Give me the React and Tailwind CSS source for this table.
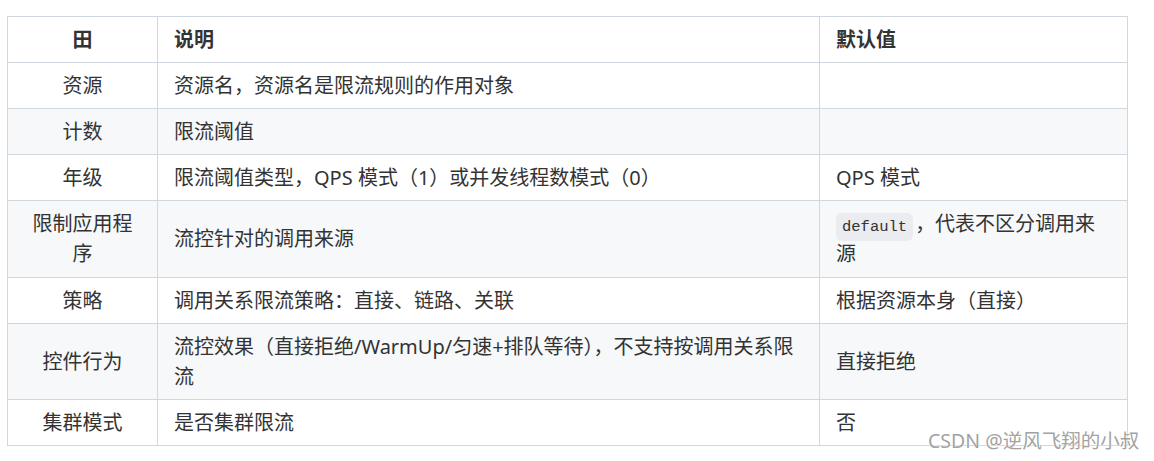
import React from 'react';

const rows = [
  { name: '资源', desc: '资源名，资源名是限流规则的作用对象', def: '' },
  { name: '计数', desc: '限流阈值', def: '' },
  { name: '年级', desc: '限流阈值类型，QPS 模式（1）或并发线程数模式（0）', def: 'QPS 模式' },
  { name: '限制应用程序', desc: '流控针对的调用来源', def: 'code' },
  { name: '策略', desc: '调用关系限流策略：直接、链路、关联', def: '根据资源本身（直接）' },
  { name: '控件行为', desc: '流控效果（直接拒绝/WarmUp/匀速+排队等待），不支持按调用关系限流', def: '直接拒绝' },
  { name: '集群模式', desc: '是否集群限流', def: '否' },
];

const cell = 'border border-[#d0d7de] px-[16px] py-[7.5px] align-middle';

const App = () => {
  return (
    <div
      className="relative w-[1154px] h-[461px] bg-white text-[#333] text-[20px] leading-[30px] overflow-hidden"
      style={{ fontFamily: '"Noto Sans", "Noto Sans CJK SC", sans-serif' }}
    >
      <div className="pt-[16px] pl-[7px]">
        <table className="border-collapse w-[1120px] table-fixed">
          <colgroup>
            <col className="w-[150px]" />
            <col className="w-[662px]" />
            <col className="w-[308px]" />
          </colgroup>
          <thead>
            <tr className="bg-white">
              <th className={`${cell} text-center font-bold`}>田</th>
              <th className={`${cell} text-left font-bold`}>说明</th>
              <th className={`${cell} text-left font-bold`}>默认值</th>
            </tr>
          </thead>
          <tbody>
            {rows.map((row, idx) => (
              <tr key={`row-${idx}`} className={idx % 2 === 1 ? 'bg-[#f6f8fa]' : 'bg-white'}>
                <td className={`${cell} text-center`}>{row.name}</td>
                <td className={cell}>{row.desc}</td>
                <td className={`${cell} ${row.def === 'code' ? 'h-[77px]' : ''}`}>
                  {row.def === 'code' ? (
                    <>
                      <code
                        className="bg-[#eaecef] rounded-[6px] px-[6px] py-[5px] mr-[2px] text-[15.5px] leading-none"
                        style={{ fontFamily: '"Liberation Mono", "DejaVu Sans Mono", monospace' }}
                      >
                        default
                      </code>
                      ，代表不区分调用来源
                    </>
                  ) : (
                    row.def
                  )}
                </td>
              </tr>
            ))}
          </tbody>
        </table>
      </div>

      {/* watermark */}
      <div
        className="absolute left-[928px] top-[427px] text-[19.5px] leading-[28px] text-[#a3a3a3] whitespace-nowrap"
        style={{ textShadow: '0 0 2px #fff, 0 0 2px #fff' }}
      >
        CSDN @逆风飞翔的小叔
      </div>
    </div>
  );
};

export default App;
